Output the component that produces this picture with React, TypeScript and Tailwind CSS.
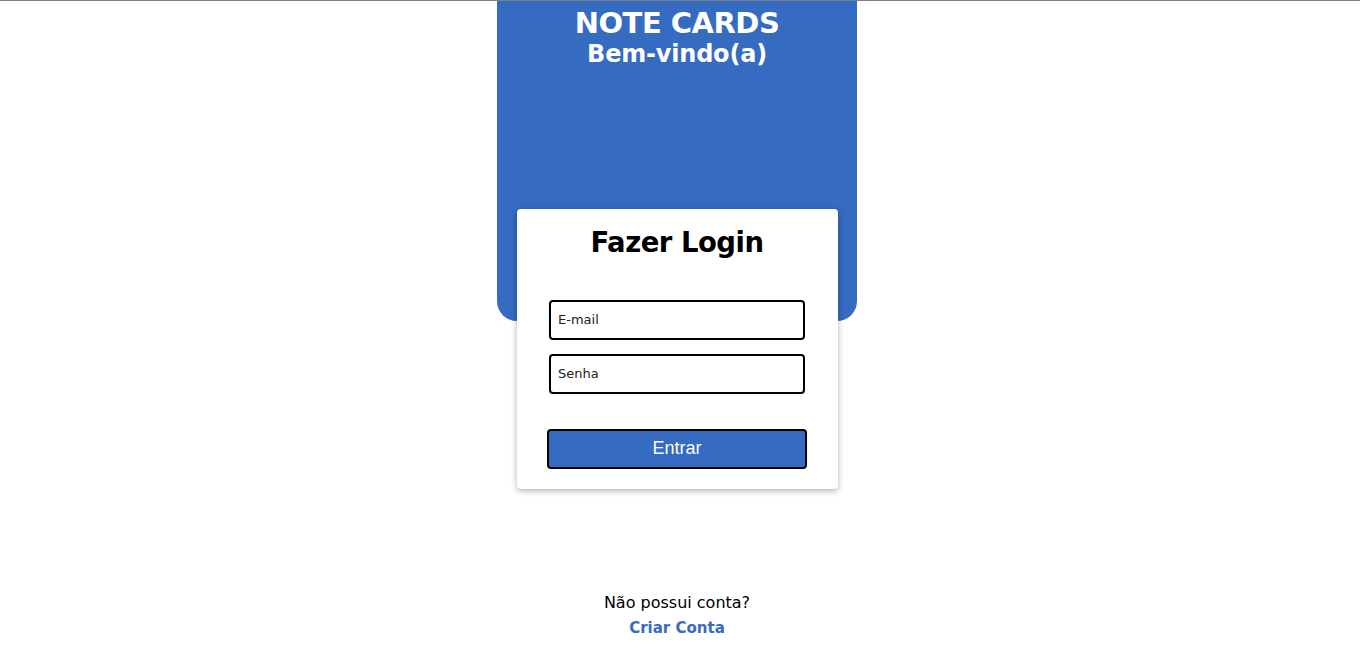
import React from 'react';

const font = { fontFamily: '"DejaVu Sans", sans-serif' };

export default function App() {
  return (
    <div className="min-h-[650px] border-t border-[#808080] bg-white" style={font}>
      <div className="flex flex-col items-center pr-[6px]">
        {/* Header panel */}
        <div className="w-[360px] h-[320px] bg-[#356bc1] rounded-b-[20px] flex flex-col items-center pt-[5px] text-white">
          <h1 className="text-[29px] font-bold leading-[34px] tracking-[-0.5px]">NOTE CARDS</h1>
          <h2 className="text-[24px] font-bold leading-[28px] tracking-[-0.2px]">Bem-vindo(a)</h2>
        </div>

        {/* Login card */}
        <div className="relative -mt-[112px] w-[321px] bg-white rounded-[4px] shadow-[0_2px_6px_rgba(0,0,0,0.3)] flex flex-col items-center pt-[14px] pb-[20px]">
          <h3 className="text-[27.5px] font-bold leading-[38px] text-black tracking-[-0.5px]">Fazer Login</h3>
          <div className="mt-[39px] flex flex-col gap-[14px]">
            <input
              type="email"
              placeholder="E-mail"
              className="w-[256px] h-[40px] border-2 border-black rounded-[4px] px-[7px] pb-[1px] text-[13px] text-black placeholder:text-[#222]"
            />
            <input
              type="password"
              placeholder="Senha"
              className="w-[256px] h-[40px] border-2 border-black rounded-[4px] px-[7px] pb-[1px] text-[13px] text-black placeholder:text-[#222]"
            />
          </div>
          <button
            className="mt-[35px] w-[260px] h-[40px] bg-[#356bc1] border-2 border-black rounded-[4px] text-white text-[18px] pb-[1px]"
            style={{ fontFamily: '"Liberation Sans", Arial, sans-serif' }}
          >
            Entrar
          </button>
        </div>

        {/* Footer */}
        <div className="mt-[103px] flex flex-col items-center">
          <p className="text-[16px] leading-[22px] text-black">Não possui conta?</p>
          <a href="#" className="mt-[3px] text-[15px] leading-[22px] font-bold text-[#356bc1]">Criar Conta</a>
        </div>
      </div>
    </div>
  );
}
